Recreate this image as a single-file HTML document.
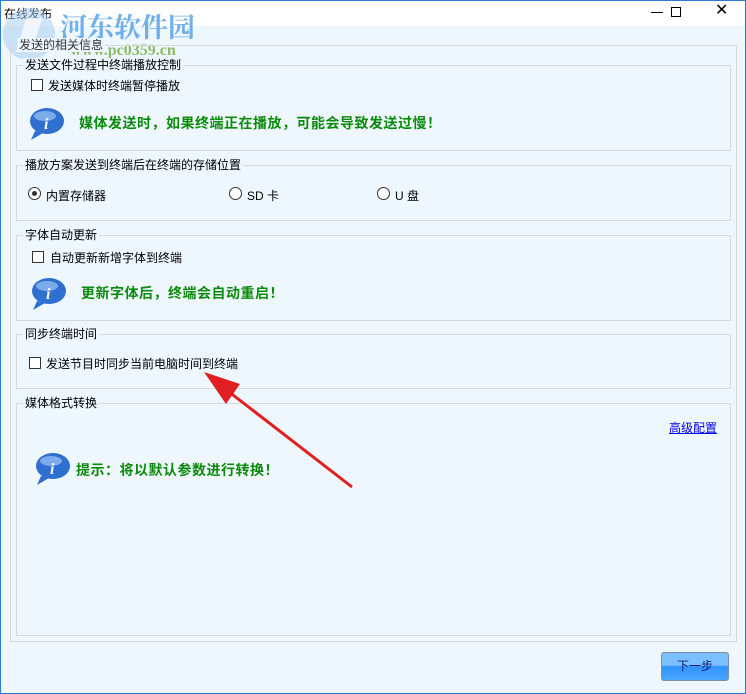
<!DOCTYPE html>
<html><head><meta charset="utf-8"><style>
*{margin:0;padding:0;box-sizing:border-box}
body{width:746px;height:694px;position:relative;overflow:hidden;background:#eef6fe;font-family:"Liberation Sans","Noto Sans CJK SC",sans-serif;font-size:12px;color:#000}
.frame{position:absolute;left:0;top:0;width:746px;height:694px;border:1px solid #2b7bd3}
.title{position:absolute;left:1px;top:1px;width:744px;height:25px;background:#fff}
.abs{position:absolute;white-space:nowrap}
.box{position:absolute;border:1px solid #d9d9d9}
.lbl{position:absolute;background:#eef6fe;padding:0 2px;line-height:14px;top:-8px;left:6px}
.cb{position:absolute;width:12px;height:12px;border:1px solid #333;background:#fff}
.rd{position:absolute;width:13px;height:13px;border:1px solid #333;border-radius:50%;background:#fff}
.green{color:#0a8a0a;font-weight:bold;font-size:14px;letter-spacing:0.5px}
</style></head><body>
<div class="frame"></div>
<div class="title"></div>
<div class="abs" style="left:4px;top:5px;font-size:12px">在线发布</div>
<div class="abs" style="left:651px;top:12px;width:12px;height:1px;background:#000"></div>
<div class="abs" style="left:671px;top:7px;width:10px;height:10px;border:1px solid #000"></div>
<div class="abs" style="left:715px;top:3px;font-size:16px;line-height:16px">✕</div>
<!-- watermark -->
<svg class="abs" style="left:2px;top:4px" width="56" height="60"><circle cx="27" cy="30" r="26" fill="#a9cff0" opacity=".55"/><path d="M14 48 L24 14 L40 14 L30 48Z" fill="#fff" opacity=".7"/></svg>
<div class="abs" style="left:60px;top:6px;font-size:27px;font-weight:bold;color:#5aa3e6;opacity:.85;font-family:'Noto Serif CJK SC',serif">河东软件园</div>
<div class="abs" style="left:70px;top:42px;font-size:16px;font-weight:bold;color:#7db24a;opacity:.85;font-family:'Liberation Serif',serif">www.pc0359.cn</div>

<div class="box" style="left:10px;top:45px;width:727px;height:597px"><div class="lbl" style="left:6px;color:#333">发送的相关信息</div></div>

<div class="box" style="left:16px;top:65px;width:715px;height:86px"><div class="lbl">发送文件过程中终端播放控制</div></div>
<div class="cb" style="left:31px;top:79px"></div><div class="abs" style="left:48px;top:77px">发送媒体时终端暂停播放</div>
<svg class="abs" style="left:27px;top:107px" width="42" height="34"><ellipse cx="20" cy="14" rx="17" ry="13" fill="#2f6fd0"/><ellipse cx="18" cy="9" rx="11" ry="5" fill="#9cc6f5" opacity=".7"/><path d="M8 24 L4 33 L16 26Z" fill="#2f6fd0"/><text x="17" y="22" fill="#fff" font-size="16" font-style="italic" font-weight="bold" font-family="Liberation Serif">i</text></svg>
<div class="abs green" style="left:79px;top:113px">媒体发送时，如果终端正在播放，可能会导致发送过慢！</div>

<div class="box" style="left:16px;top:165px;width:715px;height:56px"><div class="lbl">播放方案发送到终端后在终端的存储位置</div></div>
<div class="rd" style="left:28px;top:187px"></div><div class="abs" style="left:32px;top:191px;width:5px;height:5px;border-radius:50%;background:#333"></div>
<div class="abs" style="left:46px;top:187px">内置存储器</div>
<div class="rd" style="left:229px;top:187px"></div><div class="abs" style="left:247px;top:187px">SD 卡</div>
<div class="rd" style="left:377px;top:187px"></div><div class="abs" style="left:395px;top:187px">U 盘</div>

<div class="box" style="left:16px;top:235px;width:715px;height:86px"><div class="lbl">字体自动更新</div></div>
<div class="cb" style="left:32px;top:251px"></div><div class="abs" style="left:50px;top:249px">自动更新新增字体到终端</div>
<svg class="abs" style="left:29px;top:277px" width="42" height="34"><ellipse cx="20" cy="14" rx="17" ry="13" fill="#2f6fd0"/><ellipse cx="18" cy="9" rx="11" ry="5" fill="#9cc6f5" opacity=".7"/><path d="M8 24 L4 33 L16 26Z" fill="#2f6fd0"/><text x="17" y="22" fill="#fff" font-size="16" font-style="italic" font-weight="bold" font-family="Liberation Serif">i</text></svg>
<div class="abs green" style="left:81px;top:283px">更新字体后，终端会自动重启！</div>

<div class="box" style="left:16px;top:334px;width:715px;height:55px"><div class="lbl">同步终端时间</div></div>
<div class="cb" style="left:29px;top:357px"></div><div class="abs" style="left:46px;top:355px">发送节目时同步当前电脑时间到终端</div>

<div class="box" style="left:16px;top:403px;width:715px;height:233px"><div class="lbl">媒体格式转换</div></div>
<div class="abs" style="left:669px;top:419px;color:#0000ee;text-decoration:underline">高级配置</div>
<svg class="abs" style="left:33px;top:452px" width="42" height="34"><ellipse cx="20" cy="14" rx="17" ry="13" fill="#2f6fd0"/><ellipse cx="18" cy="9" rx="11" ry="5" fill="#9cc6f5" opacity=".7"/><path d="M8 24 L4 33 L16 26Z" fill="#2f6fd0"/><text x="17" y="22" fill="#fff" font-size="16" font-style="italic" font-weight="bold" font-family="Liberation Serif">i</text></svg>
<div class="abs green" style="left:76px;top:460px">提示：将以默认参数进行转换！</div>

<svg class="abs" style="left:200px;top:370px" width="160" height="125"><line x1="152" y1="117" x2="24" y2="18" stroke="#e02020" stroke-width="3"/><path d="M4 2 L40 14 L26 34Z" fill="#e02020"/></svg>

<div class="abs" style="left:661px;top:652px;width:68px;height:29px;border:1px solid #7a8fa8;border-radius:3px;background:linear-gradient(#7cc0ff 0%,#7cc0ff 45%,#2f93ff 50%,#4aa6ff 100%);text-align:center;line-height:27px;color:#102070">下一步</div>
</body></html>
